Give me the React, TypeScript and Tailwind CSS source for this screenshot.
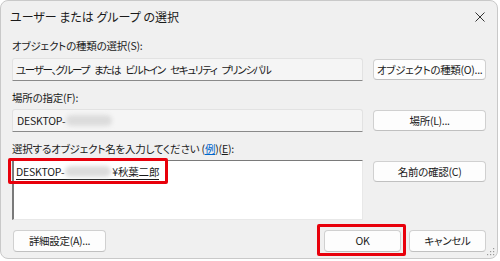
import React from 'react';

const font = "font-['Yu_Gothic_UI','Noto_Sans_CJK_JP',sans-serif] [font-feature-settings:'palt']";

const Btn: React.FC<{ label: string; className?: string }> = ({ label, className = '' }) => (
  <div
    className={`flex items-center justify-center whitespace-nowrap rounded-[4px] border border-[#d0d0d0] border-b-[#c0c0c0] bg-[#fdfdfd] text-[10.5px] tracking-[-0.3px] text-[#1a1a1a] ${className}`}
  >
    {label}
  </div>
);

// blurred hostname part
const Blur: React.FC = () => <span className="mx-[1px] inline-block h-[11px] w-[46px] rounded-full bg-[#dcdcdc] blur-[2px]" />;

export default function App() {
  return (
    <div className={`h-[261px] w-[500px] bg-white ${font}`}>
      <div className="relative flex h-[259px] w-[498px] flex-col rounded-[8px] border border-[#c9c9c9] bg-[#f0f0f0]">
        {/* title bar */}
        <div className="flex h-[31px] items-center justify-between pl-[9px] pr-[10px]">
          <span className="text-[12px] text-[#1a1a1a]">ユーザー または グループ の選択</span>
          <svg width="10" height="10" viewBox="0 0 10 10" className="mr-[2px]">
            <path d="M0.5 0.5 L9.5 9.5 M9.5 0.5 L0.5 9.5" stroke="#333" strokeWidth="1" />
          </svg>
        </div>

        <div className="flex flex-col pl-[11px] pr-[11px] text-[10.5px] tracking-[-0.2px] text-[#1a1a1a]">
          <div className="mt-[7px] h-[14px] leading-[14px]">オブジェクトの種類の選択(S):</div>
          <div className="mt-[5px] flex items-start gap-[10px]">
            <div className="flex h-[23px] w-[352px] items-center whitespace-pre rounded-t-[3px] border border-[#e2e2e2] border-b-[#8a8a8a] bg-[#f5f5f5] pl-[3px] tracking-[-1.3px] [word-spacing:4px]">
              ユーザー、グループ または ビルトイン セキュリティ プリンシパル
            </div>
            <Btn label="オブジェクトの種類(O)..." className="mt-[1px] h-[21px] w-[113px]" />
          </div>

          <div className="mt-[10px] h-[14px] leading-[14px]">場所の指定(F):</div>
          <div className="mt-[4px] flex items-start gap-[10px]">
            <div className="flex h-[23px] w-[352px] items-center rounded-t-[3px] border border-[#e2e2e2] border-b-[#8a8a8a] bg-[#f5f5f5] pl-[4px]">
              DESKTOP-
              <Blur />
            </div>
            <Btn label="場所(L)..." className="mt-[1px] h-[21px] w-[113px]" />
          </div>

          <div className="mt-[10px] h-[14px] leading-[14px]">
            選択するオブジェクト名を入力してください (<span className="text-[#0066cc] underline">例</span>)(<span className="underline">E</span>):
          </div>
          <div className="mt-[4px] flex items-start gap-[10px]">
            <div className="h-[60px] w-[352px] border border-t-[#7a7a7a] border-r-[#e8e8e8] border-b-[#e8e8e8] border-l-2 border-l-[#7a7a7a] bg-white pl-[2px] pt-[3px]">
              <span className="inline-flex h-[15px] items-center border-b border-[#1a1a1a]">
                DESKTOP-
                <Blur />
                ¥秋葉二郎
              </span>
            </div>
            <Btn label="名前の確認(C)" className="mt-[1px] h-[21px] w-[113px]" />
          </div>

          <div className="mt-[10px] flex items-center">
            <Btn label="詳細設定(A)..." className="ml-[1px] h-[22px] w-[93px]" />
            <Btn label="OK" className="ml-auto h-[22px] w-[77px]" />
            <Btn label="キャンセル" className="ml-[8px] h-[22px] w-[77px]" />
          </div>
        </div>

        {/* red annotation frames */}
        <div className="pointer-events-none absolute left-[7px] top-[157px] h-[26px] w-[160px] rounded-[2px] border-[3px] border-[#e8000b]" />
        <div className="pointer-events-none absolute left-[316px] top-[223px] h-[32px] w-[89px] rounded-[2px] border-[3px] border-[#e8000b]" />

        {/* resize grip */}
        <svg width="8" height="8" viewBox="0 0 8 8" className="absolute bottom-[2px] right-[2px]">
          <rect x="6" y="0" width="1.2" height="1.2" fill="#9a9a9a" />
          <rect x="3" y="3" width="1.2" height="1.2" fill="#9a9a9a" />
          <rect x="6" y="3" width="1.2" height="1.2" fill="#9a9a9a" />
          <rect x="0" y="6" width="1.2" height="1.2" fill="#9a9a9a" />
          <rect x="3" y="6" width="1.2" height="1.2" fill="#9a9a9a" />
          <rect x="6" y="6" width="1.2" height="1.2" fill="#9a9a9a" />
        </svg>
      </div>
    </div>
  );
}
